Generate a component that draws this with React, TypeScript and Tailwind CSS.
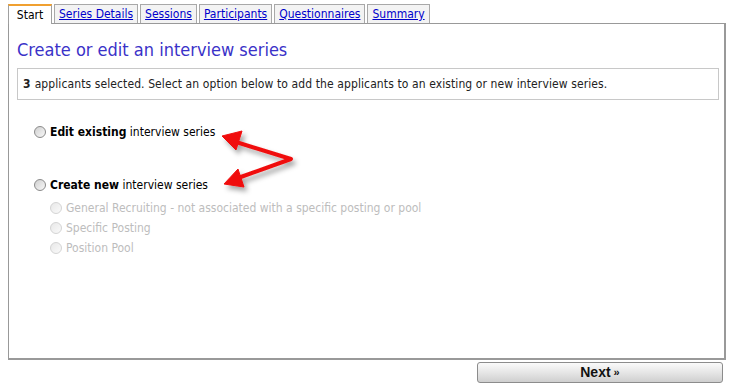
import React from "react"

const font = { fontFamily: '"Liberation Sans", Arial, sans-serif' }
const tahoma = { fontFamily: '"DejaVu Sans Condensed", "DejaVu Sans", sans-serif' }

function Radio({ disabled }: { disabled?: boolean }) {
  return (
    <span
      className={
        "inline-block w-[12px] h-[12px] rounded-full border shrink-0 " +
        (disabled
          ? "border-[#d4d4d4] bg-gradient-to-br from-[#e8e8e8] to-[#fafafa]"
          : "border-[#8a8a8a] bg-gradient-to-br from-[#d0d0d0] to-[#f8f8f8]")
      }
    />
  )
}

const tabs = ["Series Details", "Sessions", "Participants", "Questionnaires", "Summary"]

function Arrows() {
  return (
    <svg
      className="absolute left-0 top-0 pointer-events-none"
      width="730"
      height="389"
      viewBox="0 0 730 389"
    >
      <defs>
        <filter id="sh" x="-20%" y="-20%" width="140%" height="140%">
          <feDropShadow dx="3" dy="4" stdDeviation="2.5" floodColor="#000" floodOpacity="0.35" />
        </filter>
      </defs>
      <g filter="url(#sh)" fill="#f01010" stroke="#f01010">
        <polyline points="236,142 291,159 238,178" fill="none" strokeWidth="4" strokeLinejoin="round" />
        <polygon points="222,136 242,131 236,150" strokeWidth="1" />
        <polygon points="224,184 238,169 244,187" strokeWidth="1" />
      </g>
    </svg>
  )
}

export default function App() {
  return (
    <div className="relative w-[730px] h-[389px] bg-white overflow-hidden" style={font}>
      {/* tabs */}
      <div className="flex items-end pl-[8px] pt-[3px] h-[23px]" style={tahoma}>
        <div className="h-[20px] w-[44px] border-t-2 border-[#f0a030] border-x border-x-[#a0a0a0] bg-white flex items-center justify-center text-[12px] text-black relative top-[1px] z-10">
          Start
        </div>
        {tabs.map(t => (
          <div
            key={t}
            className="ml-[2px] h-[19px] px-[4px] border border-b-0 border-[#a8a8a8] bg-[#f3f3f3] flex items-center text-[12px] text-[#0000cc] underline"
          >
            {t}
          </div>
        ))}
      </div>

      {/* panel */}
      <div className="ml-[8px] w-[718px] h-[337px] border-l border-t border-r-2 border-b-2 border-[#999]">
        <div className="pl-[8px] pt-[14px] text-[18px] leading-[24px] text-[#3a32c8]" style={tahoma}>
          Create or edit an interview series
        </div>
        <div
          className="ml-[8px] mt-[6px] w-[702px] h-[32px] border border-[#c8c8c8] flex items-center pl-[5px] text-[12px] tracking-[0.1px] text-[#222]"
          style={tahoma}
        >
          <span className="font-bold mr-[4px]">3</span>
          applicants selected. Select an option below to add the applicants to an existing or new interview series.
        </div>

        <div className="pl-[25px] pt-[24px] text-[12px] text-black" style={tahoma}>
          <div className="flex items-center gap-[4px] h-[16px]">
            <Radio />
            <span><b>Edit existing</b> interview series</span>
          </div>
          <div className="flex items-center gap-[4px] h-[16px] mt-[37px]">
            <Radio />
            <span><b>Create new</b> interview series</span>
          </div>
          <div className="pl-[16px] mt-[7px] text-[#bdbdbd]">
            <div className="flex items-center gap-[4px] h-[16px]">
              <Radio disabled />
              <span>General Recruiting - not associated with a specific posting or pool</span>
            </div>
            <div className="flex items-center gap-[4px] h-[16px] mt-[4px]">
              <Radio disabled />
              <span>Specific Posting</span>
            </div>
            <div className="flex items-center gap-[4px] h-[16px] mt-[4px]">
              <Radio disabled />
              <span>Position Pool</span>
            </div>
          </div>
        </div>
      </div>

      {/* footer */}
      <div className="ml-[477px] mt-[2px] w-[246px] h-[21px] rounded-[3px] border border-[#8c8c8c] bg-gradient-to-b from-[#fafafa] via-[#e6e6e6] to-[#cfcfcf] flex items-center justify-center text-[14px] font-bold text-[#111]">
        Next <span className="ml-[3px] text-[11px]">»</span>
      </div>

      <Arrows />
    </div>
  )
}
